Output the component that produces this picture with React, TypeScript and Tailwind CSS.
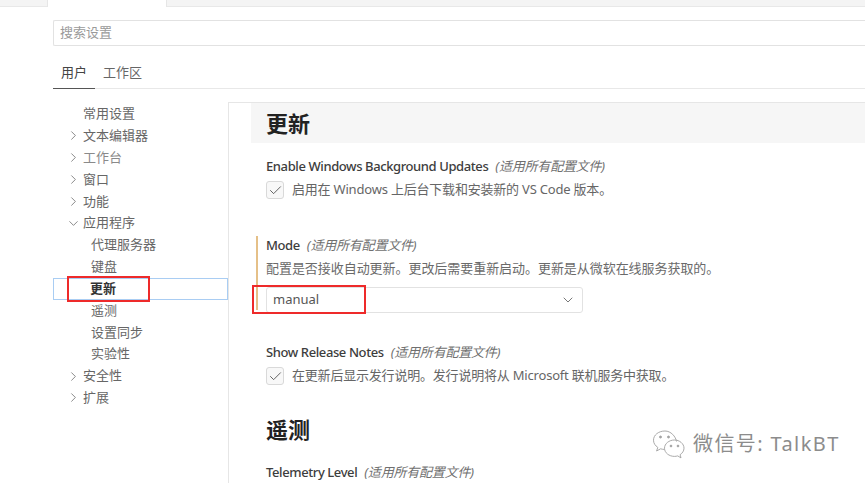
import React from 'react';
import { ChevronRight, ChevronDown, Check } from 'lucide-react';

const font = "font-['Noto_Sans','Noto_Sans_CJK_SC',sans-serif]";

const navItems = [
  { label: '常用设置', level: 0 },
  { label: '文本编辑器', level: 0, arrow: 'right' },
  { label: '工作台', level: 0, arrow: 'right', faint: true },
  { label: '窗口', level: 0, arrow: 'right' },
  { label: '功能', level: 0, arrow: 'right' },
  { label: '应用程序', level: 0, arrow: 'down' },
  { label: '代理服务器', level: 1 },
  { label: '键盘', level: 1 },
  { label: '更新', level: 1, active: true },
  { label: '遥测', level: 1 },
  { label: '设置同步', level: 1 },
  { label: '实验性', level: 1 },
  { label: '安全性', level: 0, arrow: 'right' },
  { label: '扩展', level: 0, arrow: 'right' },
];

const NavRow = ({ item }: { item: (typeof navItems)[number] }) => (
  <div
    className={`flex h-[21.85px] items-center ${item.level === 1 ? (item.active ? 'pl-[36px]' : 'pl-[38px]') : 'pl-[30px]'} ${
      item.active ? 'border border-[#a9cdf3] font-bold text-[#333333]' : item.faint ? 'text-[#8a8a8a]' : 'text-[#666666]'
    }`}
  >
    {item.arrow === 'right' && <ChevronRight className="ml-[-17px] mr-[2px] w-[15px] h-[15px] text-[#555555]" strokeWidth={1.1} />}
    {item.arrow === 'down' && <ChevronDown className="ml-[-17px] mr-[2px] w-[15px] h-[15px] text-[#555555]" strokeWidth={1.1} />}
    {item.label}
  </div>
);

const SettingTitle = ({ name }: { name: string }) => (
  <>
    <span className="font-medium text-[#3d3d3d] tracking-[-0.4px]">{name}</span>
    <span className="ml-[7px] italic font-normal text-[#6f6f6f] tracking-[-0.2px]">(适用所有配置文件)</span>
  </>
);

const CheckRow = ({ text }: { text: string }) => (
  <div className="flex items-center h-[18px] mt-[6px] text-[#666666] tracking-[-0.2px]">
    <span className="flex items-center justify-center w-[18px] h-[18px] rounded-[3px] border border-[#d9d9d9] bg-[#f8f8f8] mr-[8px]">
      <Check className="w-[15px] h-[15px] text-[#333333]" strokeWidth={1.2} />
    </span>
    {text}
  </div>
);

const WeChatIcon = () => (
  <svg width="36" height="30" viewBox="0 0 36 30" fill="none" stroke="#a0a0a0" strokeWidth="0.9">
    <path d="M14 2C7.5 2 2.5 6 2.5 11.2c0 3 1.7 5.5 4.3 7.2L5.600 22l4-2.200c1.200.4 2.500.6 3.800.6" />
    <path d="M25.500 12.500c-.8-5-5.600-10.500-11.500-10.500" />
    <path d="M23.500 11c-5.500 0-10 3.700-10 8.200s4.500 8.200 10 8.200c1.100 0 2.200-.2 3.200-.5l3.300 2-.9-3.200c2.300-1.500 3.900-3.900 3.900-6.500 0-4.500-4.500-8.200-9.500-8.200z" />
    <circle cx="9.500" cy="8" r="1" fill="#a0a0a0" />
    <circle cx="17.500" cy="8" r="1" fill="#a0a0a0" />
    <circle cx="20" cy="17" r="0.900" fill="#a0a0a0" />
    <circle cx="27" cy="17" r="0.900" fill="#a0a0a0" />
  </svg>
);

const App = () => {
  return (
    <div className={`relative flex flex-col w-[865px] h-[483px] overflow-hidden bg-white text-[13px] ${font}`}>
      {/* editor tab strip */}
      <div className="flex h-[7px] shrink-0 bg-[#f4f4f4] border-b border-[#e8e8e8]">
        <div className="ml-[47px] w-[120px] h-[7px] bg-white border-x border-[#e6e6e6]" />
      </div>

      {/* search */}
      <div className="mt-[13px] ml-[53px] h-[26px] shrink-0 flex items-center pl-[6px] border border-r-0 border-[#e2e2e2] rounded-l-[2px] text-[13px] text-[#9a9a9a]">
        搜索设置
      </div>

      {/* user / workspace tabs */}
      <div className="ml-[53px] mt-[15px] h-[28px] shrink-0 flex border-b border-[#e8e8e8] text-[13px]">
        <div className="w-[42px] h-[28px] flex justify-center pt-[2px] border-b border-[#555555] text-[#444444]">用户</div>
        <div className="ml-[8px] pt-[2px] text-[#666666]">工作区</div>
      </div>

      <div className="flex flex-1 min-h-0 mt-[14px]">
        {/* tree */}
        <div className="ml-[53px] w-[175px] shrink-0">
          {navItems.map((item) => (
            <NavRow key={item.label} item={item} />
          ))}
        </div>

        {/* settings pane */}
        <div className="flex-1 min-w-0 -mt-[1px] border-l border-t border-[#e6e6e6] pl-[22px]">
          <div className="h-[40px] flex items-center pl-[15px] bg-[#f6f6f6] text-[22px] font-bold text-[#222222]">更新</div>

          <div className="pl-[15px] mt-[14px] leading-[18px]">
            <SettingTitle name="Enable Windows Background Updates" />
          </div>
          <div className="pl-[15px]">
            <CheckRow text="启用在 Windows 上后台下载和安装新的 VS Code 版本。" />
          </div>

          <div className="mt-[39px] ml-[5px] pl-[8px] border-l-2 border-[#e5c088] h-[74px]">
            <div className="leading-[18px] -mt-[2px]">
              <SettingTitle name="Mode" />
            </div>
            <div className="mt-[5px] leading-[18px] text-[#6a6a6a] tracking-[-0.05px]">配置是否接收自动更新。更改后需要重新启动。更新是从微软在线服务获取的。</div>
            <div className="mt-[10px] w-[317px] h-[26px] flex items-center justify-between px-[6px] border border-[#e2e2e2] rounded-[3px] text-[#555555]">
              manual
              <ChevronDown className="w-[16px] h-[16px] text-[#555555]" strokeWidth={1.2} />
            </div>
          </div>

          <div className="pl-[15px] mt-[33px] leading-[18px]">
            <SettingTitle name="Show Release Notes" />
          </div>
          <div className="pl-[15px]">
            <CheckRow text="在更新后显示发行说明。发行说明将从 Microsoft 联机服务中获取。" />
          </div>

          <div className="pl-[15px] mt-[28px] text-[22px] font-bold leading-[32px] text-[#222222]">遥测</div>
          <div className="pl-[15px] mt-[18px] leading-[18px]">
            <SettingTitle name="Telemetry Level" />
          </div>
        </div>
      </div>

      {/* red annotation boxes */}
      <div className="absolute left-[67px] top-[276px] w-[83px] h-[26px] border-2 border-[#ee2a2a]" />
      <div className="absolute left-[252px] top-[285px] w-[114px] h-[29px] border-2 border-[#ee2a2a]" />

      {/* watermark */}
      <div className="absolute left-[651px] top-[429px] flex items-center gap-[6px] text-[#8c8c8c] text-[20px] tracking-[1.4px]">
        <WeChatIcon />
        微信号: TalkBT
      </div>
    </div>
  );
};

export default App;
